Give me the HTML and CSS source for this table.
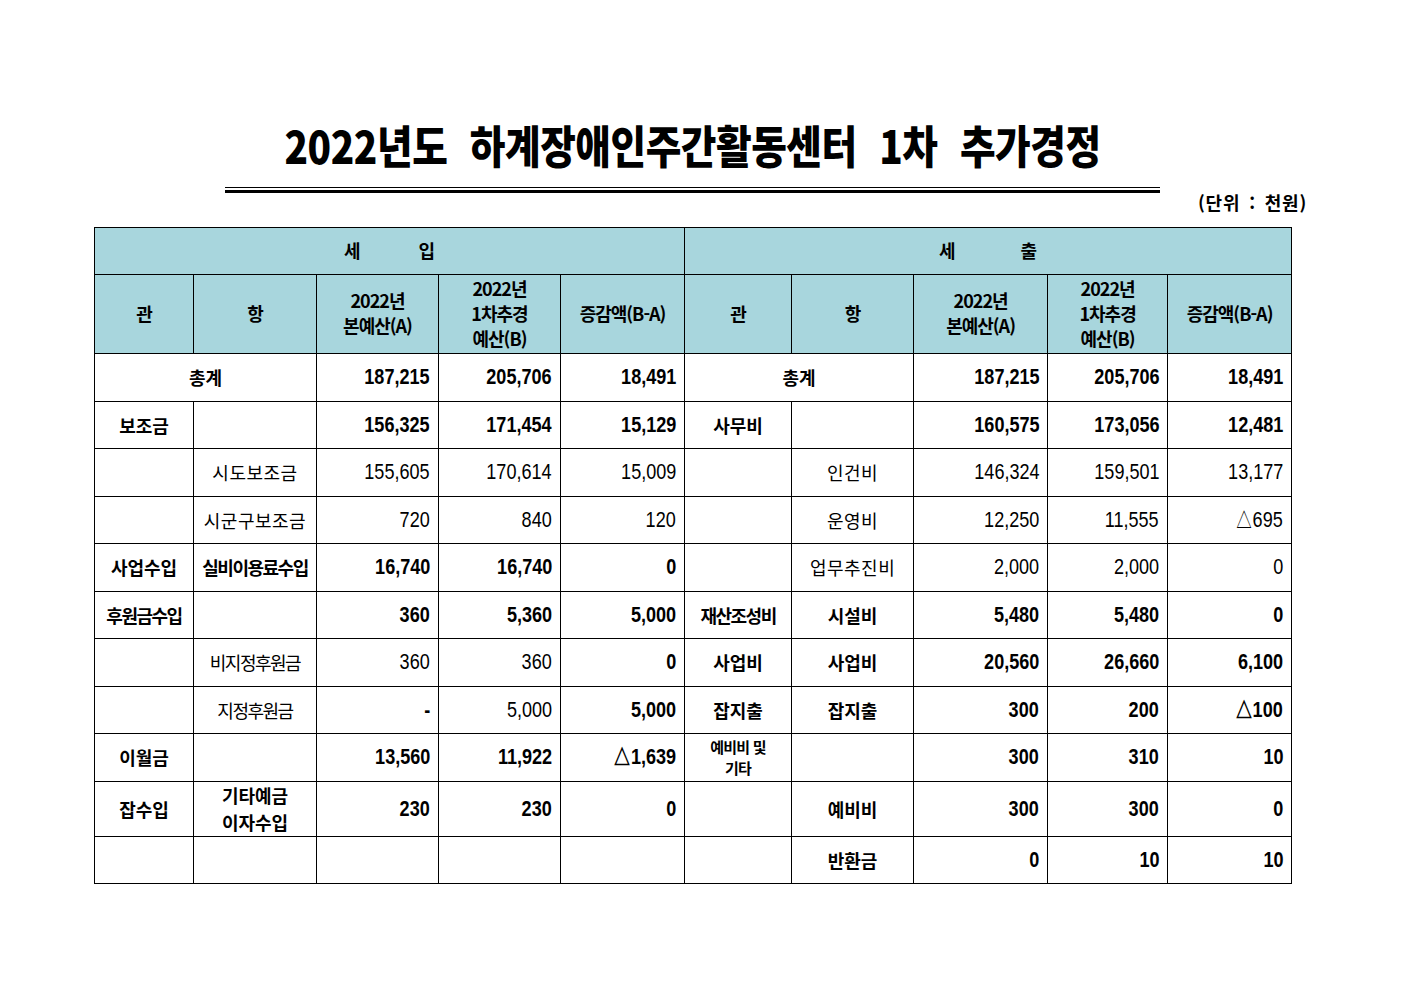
FILE: index.html
```html
<!DOCTYPE html>
<html lang="ko">
<head>
<meta charset="utf-8">
<title>2022년도 하계장애인주간활동센터 1차 추가경정</title>
<link rel="stylesheet" href="styles.css">
</head>
<body>
<div class="page">
  <h1 class="title"><span class="title-inner">2022년도 하계장애인주간활동센터 1차 추가경정</span></h1>
  <div class="rule"></div>
  <div class="unit">(단위 : 천원)</div>
  <table class="budget">
    <colgroup>
      <col class="c1"><col class="c2"><col class="c3"><col class="c4"><col class="c5">
      <col class="c6"><col class="c7"><col class="c8"><col class="c9"><col class="c10">
    </colgroup>
    <thead>
      <tr class="h1">
        <th colspan="5"><span class="sp">세</span><span class="sp">입</span></th>
        <th colspan="5"><span class="sp">세</span><span class="sp sp2">출</span></th>
      </tr>
      <tr class="h2">
        <th>관</th><th>항</th>
        <th>2022년<br>본예산(A)</th>
        <th>2022년<br>1차추경<br>예산(B)</th>
        <th>증감액(B-A)</th>
        <th>관</th><th>항</th>
        <th>2022년<br>본예산(A)</th>
        <th>2022년<br>1차추경<br>예산(B)</th>
        <th>증감액(B-A)</th>
      </tr>
    </thead>
    <tbody>
      <tr>
        <td colspan="2" class="lb b">총계</td>
        <td class="n b"><span class="v">187,215</span></td><td class="n b"><span class="v">205,706</span></td><td class="n b"><span class="v">18,491</span></td>
        <td colspan="2" class="lb b">총계</td>
        <td class="n b"><span class="v">187,215</span></td><td class="n b"><span class="v">205,706</span></td><td class="n b"><span class="v">18,491</span></td>
      </tr>
      <tr>
        <td class="lb b">보조금</td><td></td>
        <td class="n b"><span class="v">156,325</span></td><td class="n b"><span class="v">171,454</span></td><td class="n b"><span class="v">15,129</span></td>
        <td class="lb b">사무비</td><td></td>
        <td class="n b"><span class="v">160,575</span></td><td class="n b"><span class="v">173,056</span></td><td class="n b"><span class="v">12,481</span></td>
      </tr>
      <tr>
        <td></td><td class="lb sub">시도보조금</td>
        <td class="n"><span class="v">155,605</span></td><td class="n"><span class="v">170,614</span></td><td class="n"><span class="v">15,009</span></td>
        <td></td><td class="lb sub">인건비</td>
        <td class="n"><span class="v">146,324</span></td><td class="n"><span class="v">159,501</span></td><td class="n"><span class="v">13,177</span></td>
      </tr>
      <tr>
        <td></td><td class="lb sub">시군구보조금</td>
        <td class="n"><span class="v">720</span></td><td class="n"><span class="v">840</span></td><td class="n"><span class="v">120</span></td>
        <td></td><td class="lb sub">운영비</td>
        <td class="n"><span class="v">12,250</span></td><td class="n"><span class="v">11,555</span></td><td class="n"><span class="v">△695</span></td>
      </tr>
      <tr>
        <td class="lb b">사업수입</td><td class="lb b tight">실비이용료수입</td>
        <td class="n b"><span class="v">16,740</span></td><td class="n b"><span class="v">16,740</span></td><td class="n b"><span class="v">0</span></td>
        <td></td><td class="lb sub">업무추진비</td>
        <td class="n"><span class="v">2,000</span></td><td class="n"><span class="v">2,000</span></td><td class="n"><span class="v">0</span></td>
      </tr>
      <tr>
        <td class="lb b tight">후원금수입</td><td></td>
        <td class="n b"><span class="v">360</span></td><td class="n b"><span class="v">5,360</span></td><td class="n b"><span class="v">5,000</span></td>
        <td class="lb b tight">재산조성비</td><td class="lb b">시설비</td>
        <td class="n b"><span class="v">5,480</span></td><td class="n b"><span class="v">5,480</span></td><td class="n b"><span class="v">0</span></td>
      </tr>
      <tr>
        <td></td><td class="lb sub tight">비지정후원금</td>
        <td class="n"><span class="v">360</span></td><td class="n"><span class="v">360</span></td><td class="n b"><span class="v">0</span></td>
        <td class="lb b">사업비</td><td class="lb b">사업비</td>
        <td class="n b"><span class="v">20,560</span></td><td class="n b"><span class="v">26,660</span></td><td class="n b"><span class="v">6,100</span></td>
      </tr>
      <tr>
        <td></td><td class="lb sub tight">지정후원금</td>
        <td class="n b"><span class="v">-</span></td><td class="n"><span class="v">5,000</span></td><td class="n b"><span class="v">5,000</span></td>
        <td class="lb b">잡지출</td><td class="lb b">잡지출</td>
        <td class="n b"><span class="v">300</span></td><td class="n b"><span class="v">200</span></td><td class="n b"><span class="v">△100</span></td>
      </tr>
      <tr>
        <td class="lb b">이월금</td><td></td>
        <td class="n b"><span class="v">13,560</span></td><td class="n b"><span class="v">11,922</span></td><td class="n b"><span class="v">△1,639</span></td>
        <td class="lb b small">예비비 및<br>기타</td><td></td>
        <td class="n b"><span class="v">300</span></td><td class="n b"><span class="v">310</span></td><td class="n b"><span class="v">10</span></td>
      </tr>
      <tr class="tall">
        <td class="lb b">잡수입</td><td class="lb b two">기타예금<br>이자수입</td>
        <td class="n b"><span class="v">230</span></td><td class="n b"><span class="v">230</span></td><td class="n b"><span class="v">0</span></td>
        <td></td><td class="lb b">예비비</td>
        <td class="n b"><span class="v">300</span></td><td class="n b"><span class="v">300</span></td><td class="n b"><span class="v">0</span></td>
      </tr>
      <tr>
        <td></td><td></td><td></td><td></td><td></td>
        <td></td><td class="lb b">반환금</td>
        <td class="n b"><span class="v">0</span></td><td class="n b"><span class="v">10</span></td><td class="n b"><span class="v">10</span></td>
      </tr>
    </tbody>
  </table>
</div>
</body>
</html>
```

FILE: styles.css
```css
html, body {
  margin: 0;
  padding: 0;
  background: #ffffff;
}

body {
  font-family: "Noto Sans CJK KR", "Noto Sans", sans-serif;
  color: #000;
}

.page {
  width: 1197px;
  margin-left: 94px;
  padding-top: 116px;
}

.title {
  margin: 0;
  height: 58px;
  text-align: center;
  font-size: 45px;
  font-weight: 900;
  line-height: 58px;
  white-space: nowrap;
}

.title-inner {
  display: inline-block;
  transform: scaleX(0.86);
  transform-origin: center;
  word-spacing: 14px;
  letter-spacing: -0.5px;
}

.rule {
  width: 935px;
  margin: 13px auto 0;
  height: 2px;
  border-top: 1px solid #000;
  border-bottom: 3px solid #000;
}

.unit {
  text-align: right;
  margin-right: -16px;
  height: 34px;
  font-size: 18px;
  font-weight: 700;
  line-height: 18px;
  letter-spacing: 0.8px;
  word-spacing: 3px;
}

.budget {
  border-collapse: collapse;
  table-layout: fixed;
  width: 1197px;
}

.c1 { width: 99px; }
.c2 { width: 123px; }
.c3 { width: 122px; }
.c4 { width: 122px; }
.c5 { width: 124px; }
.c6 { width: 107px; }
.c7 { width: 122px; }
.c8 { width: 134px; }
.c9 { width: 120px; }
.c10 { width: 124px; }

.budget th,
.budget td {
  border: 1px solid #000;
  padding: 0;
  height: 46.5px;
  vertical-align: middle;
}

.budget th {
  background: #a8d6dd;
  font-weight: 700;
  font-size: 18px;
  letter-spacing: -1px;
  line-height: 25px;
  text-align: center;
  padding-bottom: 2px;
}

.h1 th {
  height: 44px;
  font-size: 18px;
  letter-spacing: 0;
}

.h2 th {
  height: 76px;
}

.sp {
  display: inline-block;
  margin: 0 29px;
}

.sp2 {
  margin-left: 36px;
}

.budget td.n {
  text-align: right;
  padding-right: 8px;
  font-family: "Liberation Sans", "Arial", sans-serif;
  font-size: 22px;
  font-weight: 400;
  white-space: nowrap;
}

.v {
  display: inline-block;
  transform: scaleX(0.82);
  transform-origin: right center;
}

.budget td.n.b {
  font-weight: 700;
}

.budget td.lb {
  text-align: center;
  font-size: 18px;
  font-weight: 400;
}

.budget td.lb.b {
  font-weight: 700;
}

.budget td.sub {
  letter-spacing: 0.5px;
}

.budget td.tight {
  letter-spacing: -1.5px;
}

.budget td.small {
  font-size: 15px;
  line-height: 21px;
  letter-spacing: -0.8px;
}

.budget td.two {
  line-height: 27px;
  font-weight: 500;
}

.tall td {
  height: 51px;
}
```
